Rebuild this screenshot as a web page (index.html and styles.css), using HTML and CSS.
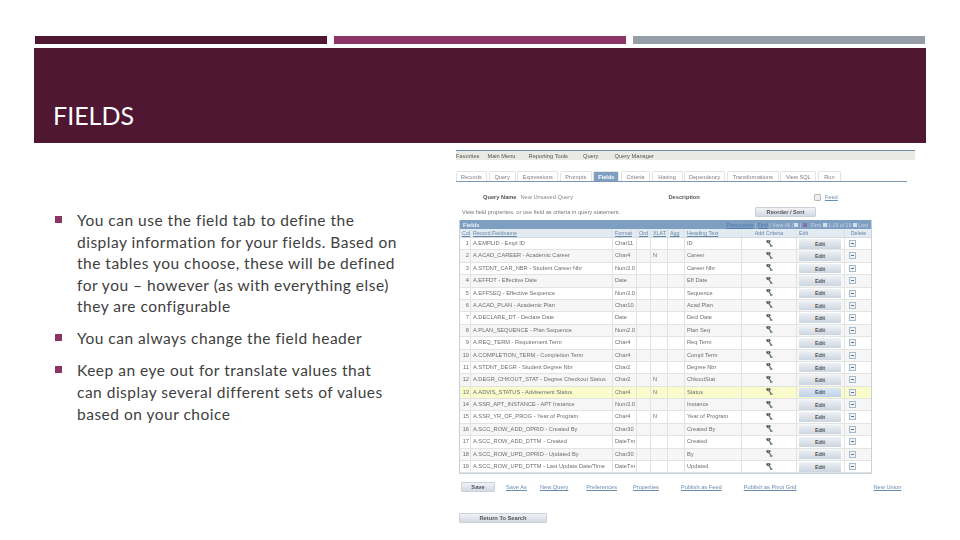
FILE: index.html
```html
<!DOCTYPE html>
<html lang="en">
<head>
    <meta charset="UTF-8">
    <title>Fields</title>
    <link rel="stylesheet" href="styles.css">
</head>
<body>
    <svg class="defs" width="0" height="0">
        <symbol id="crit" viewBox="0 0 8 8">
            <path d="M.5 1h4.500M.5 1l1.800 2.200M5 1L3.200 3.200M2.300 3.200h.9" fill="none" stroke="#50565a" stroke-width="1.300"/>
            <path d="M3.800 3.500l2.200 3.300M4.500 7h3" fill="none" stroke="#66806a" stroke-width="1.500"/>
        </symbol>
    </svg>
    <div class="bars">
        <div class="bar bar-dark"></div>
        <div class="bar bar-mid"></div>
        <div class="bar bar-grey"></div>
    </div>
    <header class="banner">
        <h1>FIELDS</h1>
    </header>
    <main class="content">
        <ul class="bullets">
            <li>You can use the field tab to define the display information for your fields. Based on the tables you choose, these will be defined for you – however (as with everything else) they are configurable</li>
            <li>You can always change the field header</li>
            <li>Keep an eye out for translate values that can display several different sets of values based on your choice</li>
        </ul>
        <section class="shot">
            <nav class="crumbs">
                <span>Favorites</span><span>Main Menu</span><span>Reporting Tools</span><span>Query</span><span>Query Manager</span>
            </nav>
            <div class="tabs">
                <span class="tab w30">Records</span>
                <span class="tab w27">Query</span>
                <span class="tab w41">Expressions</span>
                <span class="tab w32">Prompts</span>
                <span class="tab w26 active">Fields</span>
                <span class="tab w29">Criteria</span>
                <span class="tab w28">Having</span>
                <span class="tab w41">Dependency</span>
                <span class="tab w52">Transformations</span>
                <span class="tab w34">View SQL</span>
                <span class="tab w22">Run</span>
            </div>
            <div class="query-line">
                <b>Query Name</b><span class="query-val">New Unsaved Query</span><b class="desc">Description</b>
                <i class="check"></i><a class="feed">Feed</a>
            </div>
            <div class="view-line">
                <span>View field properties, or use field as criteria in query statement.</span>
                <button class="btn reorder">Reorder / Sort</button>
            </div>
            <div class="grid">
                <div class="grid-title">
                    <b>Fields</b>
                    <span class="tools"><u>Personalize</u> | <u>Find</u> | View All | <i class="tool"></i> | <i class="tool purple"></i> &nbsp; First <i class="tool"></i> 1-19 of 19 <i class="tool"></i> Last</span>
                </div>
                <div class="row head">
                    <u>Col</u><u>Record.Fieldname</u><u>Format</u><u>Ord</u><u>XLAT</u><u>Agg</u><u>Heading Text</u><span class="mid">Add Criteria</span><span>Edit</span><span class="mid">Delete</span>
                </div>
                <div class="row"><span class="num">1</span><span>A.EMPLID - Empl ID</span><span>Char11</span><span></span><span></span><span></span><span>ID</span><span class="mid"><svg class="ic"><use href="#crit"/></svg></span><span class="mid"><button class="edit">Edit</button></span><span class="mid"><i class="del"></i></span></div>
                <div class="row"><span class="num">2</span><span>A.ACAD_CAREER - Academic Career</span><span>Char4</span><span></span><span>N</span><span></span><span>Career</span><span class="mid"><svg class="ic"><use href="#crit"/></svg></span><span class="mid"><button class="edit">Edit</button></span><span class="mid"><i class="del"></i></span></div>
                <div class="row"><span class="num">3</span><span>A.STDNT_CAR_NBR - Student Career Nbr</span><span>Num3.0</span><span></span><span></span><span></span><span>Career Nbr</span><span class="mid"><svg class="ic"><use href="#crit"/></svg></span><span class="mid"><button class="edit">Edit</button></span><span class="mid"><i class="del"></i></span></div>
                <div class="row"><span class="num">4</span><span>A.EFFDT - Effective Date</span><span>Date</span><span></span><span></span><span></span><span>Eff Date</span><span class="mid"><svg class="ic"><use href="#crit"/></svg></span><span class="mid"><button class="edit">Edit</button></span><span class="mid"><i class="del"></i></span></div>
                <div class="row"><span class="num">5</span><span>A.EFFSEQ - Effective Sequence</span><span>Num3.0</span><span></span><span></span><span></span><span>Sequence</span><span class="mid"><svg class="ic"><use href="#crit"/></svg></span><span class="mid"><button class="edit">Edit</button></span><span class="mid"><i class="del"></i></span></div>
                <div class="row"><span class="num">6</span><span>A.ACAD_PLAN - Academic Plan</span><span>Char10</span><span></span><span></span><span></span><span>Acad Plan</span><span class="mid"><svg class="ic"><use href="#crit"/></svg></span><span class="mid"><button class="edit">Edit</button></span><span class="mid"><i class="del"></i></span></div>
                <div class="row"><span class="num">7</span><span>A.DECLARE_DT - Declare Date</span><span>Date</span><span></span><span></span><span></span><span>Decl Date</span><span class="mid"><svg class="ic"><use href="#crit"/></svg></span><span class="mid"><button class="edit">Edit</button></span><span class="mid"><i class="del"></i></span></div>
                <div class="row"><span class="num">8</span><span>A.PLAN_SEQUENCE - Plan Sequence</span><span>Num2.0</span><span></span><span></span><span></span><span>Plan Seq</span><span class="mid"><svg class="ic"><use href="#crit"/></svg></span><span class="mid"><button class="edit">Edit</button></span><span class="mid"><i class="del"></i></span></div>
                <div class="row"><span class="num">9</span><span>A.REQ_TERM - Requirement Term</span><span>Char4</span><span></span><span></span><span></span><span>Req Term</span><span class="mid"><svg class="ic"><use href="#crit"/></svg></span><span class="mid"><button class="edit">Edit</button></span><span class="mid"><i class="del"></i></span></div>
                <div class="row"><span class="num">10</span><span>A.COMPLETION_TERM - Completion Term</span><span>Char4</span><span></span><span></span><span></span><span>Compl Term</span><span class="mid"><svg class="ic"><use href="#crit"/></svg></span><span class="mid"><button class="edit">Edit</button></span><span class="mid"><i class="del"></i></span></div>
                <div class="row"><span class="num">11</span><span>A.STDNT_DEGR - Student Degree Nbr</span><span>Char2</span><span></span><span></span><span></span><span>Degree Nbr</span><span class="mid"><svg class="ic"><use href="#crit"/></svg></span><span class="mid"><button class="edit">Edit</button></span><span class="mid"><i class="del"></i></span></div>
                <div class="row"><span class="num">12</span><span>A.DEGR_CHKOUT_STAT - Degree Checkout Status</span><span>Char2</span><span></span><span>N</span><span></span><span>ChkoutStat</span><span class="mid"><svg class="ic"><use href="#crit"/></svg></span><span class="mid"><button class="edit">Edit</button></span><span class="mid"><i class="del"></i></span></div>
                <div class="row hilite"><span class="num">13</span><span>A.ADVIS_STATUS - Advisement Status</span><span>Char4</span><span></span><span>N</span><span></span><span>Status</span><span class="mid"><svg class="ic"><use href="#crit"/></svg></span><span class="mid"><button class="edit">Edit</button></span><span class="mid"><i class="del"></i></span></div>
                <div class="row"><span class="num">14</span><span>A.SSR_APT_INSTANCE - APT Instance</span><span>Num3.0</span><span></span><span></span><span></span><span>Instance</span><span class="mid"><svg class="ic"><use href="#crit"/></svg></span><span class="mid"><button class="edit">Edit</button></span><span class="mid"><i class="del"></i></span></div>
                <div class="row"><span class="num">15</span><span>A.SSR_YR_OF_PROG - Year of Program</span><span>Char4</span><span></span><span>N</span><span></span><span>Year of Program</span><span class="mid"><svg class="ic"><use href="#crit"/></svg></span><span class="mid"><button class="edit">Edit</button></span><span class="mid"><i class="del"></i></span></div>
                <div class="row"><span class="num">16</span><span>A.SCC_ROW_ADD_OPRID - Created By</span><span>Char30</span><span></span><span></span><span></span><span>Created By</span><span class="mid"><svg class="ic"><use href="#crit"/></svg></span><span class="mid"><button class="edit">Edit</button></span><span class="mid"><i class="del"></i></span></div>
                <div class="row"><span class="num">17</span><span>A.SCC_ROW_ADD_DTTM - Created</span><span>DateTm</span><span></span><span></span><span></span><span>Created</span><span class="mid"><svg class="ic"><use href="#crit"/></svg></span><span class="mid"><button class="edit">Edit</button></span><span class="mid"><i class="del"></i></span></div>
                <div class="row"><span class="num">18</span><span>A.SCC_ROW_UPD_OPRID - Updated By</span><span>Char30</span><span></span><span></span><span></span><span>By</span><span class="mid"><svg class="ic"><use href="#crit"/></svg></span><span class="mid"><button class="edit">Edit</button></span><span class="mid"><i class="del"></i></span></div>
                <div class="row"><span class="num">19</span><span>A.SCC_ROW_UPD_DTTM - Last Update Date/Time</span><span>DateTm</span><span></span><span></span><span></span><span>Updated</span><span class="mid"><svg class="ic"><use href="#crit"/></svg></span><span class="mid"><button class="edit">Edit</button></span><span class="mid"><i class="del"></i></span></div>
            </div>
            <div class="actions">
                <button class="btn save">Save</button>
                <a class="l1">Save As</a>
                <a class="l2">New Query</a>
                <a class="l3">Preferences</a>
                <a class="l4">Properties</a>
                <a class="l5">Publish as Feed</a>
                <a class="l6">Publish as Pivot Grid</a>
                <a class="l7">New Union</a>
            </div>
            <button class="btn back">Return To Search</button>
        </section>
    </main>
</body>
</html>
```

FILE: styles.css
```css
* {
    box-sizing: border-box;
}
html, body {
    margin: 0;
    height: 540px;
    overflow: hidden;
    background: #fff;
}
body {
    font-family: Lato, "Open Sans", sans-serif;
}
.defs {
    position: absolute;
}

/* top of the slide */
.bars {
    display: flex;
    gap: 7px;
    padding: 36px 35px 0;
}
.bar {
    flex: 1;
    height: 8px;
}
.bar-dark { background: #4f1732; }
.bar-mid { background: #8b3567; }
.bar-grey { background: #959da6; }
.banner {
    display: flex;
    align-items: flex-end;
    height: 95px;
    margin: 4px 34px 0;
    padding: 0 19px 12px;
    background: #4f1732;
}
.banner h1 {
    margin: 0;
    font-size: 25px;
    line-height: 32px;
    font-weight: 400;
    color: #fff;
}

.content {
    display: flex;
    padding: 7px 45px 0 55px;
}

/* left text */
.bullets {
    flex: none;
    width: 343px;
    margin: 60px 0 0;
    padding: 0;
    list-style: none;
    font-size: 15.5px;
    line-height: 21.6px;
    letter-spacing: 0.5px;
    color: #404040;
}
.bullets li {
    position: relative;
    padding-left: 22px;
    margin-bottom: 10.4px;
}
.bullets li::before {
    content: "";
    position: absolute;
    left: 0;
    top: 6px;
    width: 7px;
    height: 7px;
    background: #8b3567;
}

/* screenshot of the query manager */
.shot {
    width: 460px;
    margin-left: 58px;
    font-family: "Liberation Sans", Arial, sans-serif;
    font-size: 5.7px;
    color: #666;
    filter: blur(0.5px);
}
.crumbs {
    display: flex;
    align-items: center;
    gap: 8px;
    height: 10px;
    border-top: 1px solid #6e8cad;
    background: #e9ebe3;
    color: #555;
}
.crumbs span:nth-child(3) { margin-left: 5px; }
.crumbs span:nth-child(4) { margin-left: 7px; }
.crumbs span:nth-child(5) { margin-left: 8px; }
.tabs {
    display: flex;
    gap: 1.6px;
    width: 451px;
    height: 11px;
    margin-top: 11px;
    border-bottom: 1px solid #7d97b3;
    font-size: 5.6px;
    color: #7a7f84;
}
.tab {
    display: flex;
    align-items: center;
    justify-content: center;
    border: 1px solid #e2e4e4;
    border-bottom: 0;
    border-radius: 2px 2px 0 0;
    white-space: nowrap;
}
.tab.active {
    background: #7f9fc2;
    color: #fff;
    font-weight: bold;
}
.w22 { width: 23px; }
.w26 { width: 26px; }
.w27 { width: 27px; }
.w28 { width: 31px; }
.w29 { width: 29px; }
.w30 { width: 31px; }
.w32 { width: 32px; }
.w34 { width: 36px; }
.w41 { width: 41px; }
.w52 { width: 52px; }
.query-line {
    display: flex;
    align-items: center;
    height: 10px;
    margin-top: 10px;
    padding-left: 27px;
}
.query-line b {
    color: #555;
}
.query-val {
    margin-left: 4px;
    width: 148px;
    color: #888;
}
.desc {
    margin-right: 96px;
}
.check {
    width: 7px;
    height: 7px;
    margin-left: 18px;
    border: 1px solid #bbb;
    border-radius: 1px;
    background: #eee;
}
.feed {
    margin-left: 4px;
    color: #6b8bb0;
    text-decoration: underline;
}
.view-line {
    display: flex;
    align-items: center;
    justify-content: space-between;
    width: 360px;
    height: 10px;
    margin-top: 5px;
    padding-left: 6px;
    color: #777;
}
.btn {
    padding: 0;
    border: 1px solid #ccd1d9;
    border-radius: 1px;
    background: linear-gradient(#f0f2f6, #d3dae4);
    font: bold 5.7px "Liberation Sans", Arial, sans-serif;
    color: #555;
}
.reorder {
    width: 61px;
    height: 10px;
    flex: none;
}

/* the fields grid */
.grid {
    width: 413px;
    margin: 3px 0 0 3px;
    border: 1px solid #c5d2de;
    border-top: 0;
}
.grid-title {
    display: flex;
    align-items: center;
    justify-content: space-between;
    height: 9px;
    padding: 0 3px;
    background: #7f9fc2;
    color: #c3d3e4;
    font-size: 5.2px;
}
.grid-title b {
    color: #eef3f8;
    font-size: 5.7px;
}
.tools u {
    color: #4f7bad;
}
.tool {
    display: inline-block;
    width: 4px;
    height: 4px;
    background: #d5dfea;
}
.tool.purple {
    background: #8a6fb0;
}
.row {
    display: grid;
    grid-template-columns: 11px 142px 24px 14px 17px 17px 57px 55px 48px 27px;
    height: 12.4px;
    border-bottom: 1px solid #e2e4e4;
    background: #fff;
    line-height: 11.4px;
    color: #6a6e72;
}
.row:nth-child(even) {
    background: #f6f6f6;
}
.row > * {
    display: block;
    padding-left: 2px;
    border-right: 1px solid #e2e4e4;
    white-space: nowrap;
    overflow: hidden;
}
.row > *:last-child {
    border-right: 0;
}
.row .num {
    padding: 0 1px 0 0;
    text-align: right;
}
.row .mid {
    padding: 0;
    text-align: center;
}
.row.head {
    height: 9px;
    background: #e2eaf2;
    border-bottom: 1px solid #d2dbe4;
    line-height: 8px;
    font-size: 5.4px;
    color: #6787a8;
}
.row.hilite {
    background: #fafccb;
}
.row.hilite .edit {
    background: linear-gradient(#dbe7f6, #bed2ea);
}
.ic {
    width: 7px;
    height: 7px;
    margin-top: 1.500px;
}
.edit {
    display: block;
    width: 42px;
    height: 9.500px;
    margin: 1px 0 0 2px;
    padding: 0;
    border: 0;
    background: linear-gradient(#eef1f5, #ccd5e0);
    font: bold 5.4px "Liberation Sans", Arial, sans-serif;
    color: #555;
}
.del {
    display: block;
    position: relative;
    width: 7px;
    height: 7px;
    margin: 2px 0 0 4px;
    border: 1px solid #a9bacb;
    background: #f0f3f7;
}
.del::after {
    content: "";
    position: absolute;
    left: 1px;
    top: 2px;
    width: 3px;
    height: 1px;
    background: #5f7085;
}

/* links under the grid */
.actions {
    display: flex;
    align-items: center;
    height: 10px;
    margin-top: 8px;
    padding-left: 5px;
}
.actions a {
    color: #6b8bb0;
    text-decoration: underline;
    white-space: nowrap;
}
.save {
    width: 34px;
    height: 10px;
    flex: none;
}
.l1 { margin-left: 11px; }
.l2 { margin-left: 13px; }
.l3 { margin-left: 18px; }
.l4 { margin-left: 16px; }
.l5 { margin-left: 22px; }
.l6 { margin-left: 22px; }
.l7 { margin-left: 77px; }
.back {
    display: block;
    width: 88px;
    height: 10px;
    margin: 21px 0 0 3px;
}
```
